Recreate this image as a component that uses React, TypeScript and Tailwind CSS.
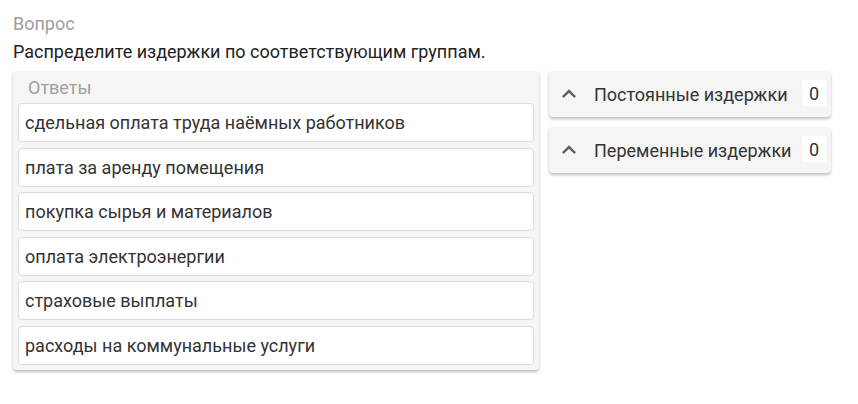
const answers = [
  "сдельная оплата труда наёмных работников",
  "плата за аренду помещения",
  "покупка сырья и материалов",
  "оплата электроэнергии",
  "страховые выплаты",
  "расходы на коммунальные услуги",
]

const groups = ["Постоянные издержки", "Переменные издержки"]

function ChevronUp() {
  return (
    <svg width="28" height="28" viewBox="0 0 24 24" className="shrink-0 fill-[#616161]">
      <path d="M7.41 15.41 12 10.83l4.59 4.58L18 14l-6-6-6 6z" />
    </svg>
  )
}

export default function App() {
  return (
    <div className="min-h-[404px] bg-white px-[13px] pt-[12px] font-['Roboto',sans-serif] text-[18px] text-[#212121]">
      <div className="leading-[24px] text-[#9e9e9e]">Вопрос</div>
      <div className="mt-[4px] leading-[24px]">Распределите издержки по соответствующим группам.</div>

      <div className="mt-[7px] flex items-start gap-[10px]">
        <div className="w-[526px] rounded-[4px] bg-[#f5f5f5] px-[5px] pb-[5px] shadow-[0_2px_3px_rgba(0,0,0,0.25)]">
          <div className="h-[32px] pl-[10px] pt-[6px] leading-[22px] text-[#9e9e9e]">Ответы</div>
          <div className="flex flex-col gap-[5.6px]">
            {answers.map((a) => (
              <div
                key={a}
                className="flex h-[39px] items-center rounded-[4px] border border-[#dcdcdc] bg-white px-[6px] text-[#333]"
              >
                {a}
              </div>
            ))}
          </div>
        </div>

        <div className="flex w-[282px] flex-col gap-[10px]">
          {groups.map((g) => (
            <div
              key={g}
              className="flex h-[46px] items-center rounded-[4px] bg-[#f5f5f5] pl-[6px] pr-[5px] shadow-[0_2px_3px_rgba(0,0,0,0.25)]"
            >
              <ChevronUp />
              <span className="ml-[11px] flex-1 text-[#333]">{g}</span>
              <span className="mb-[2px] flex h-[26px] min-w-[24px] items-center justify-center rounded-[3px] bg-white px-[6px] text-[#333]">
                0
              </span>
            </div>
          ))}
        </div>
      </div>
    </div>
  )
}
